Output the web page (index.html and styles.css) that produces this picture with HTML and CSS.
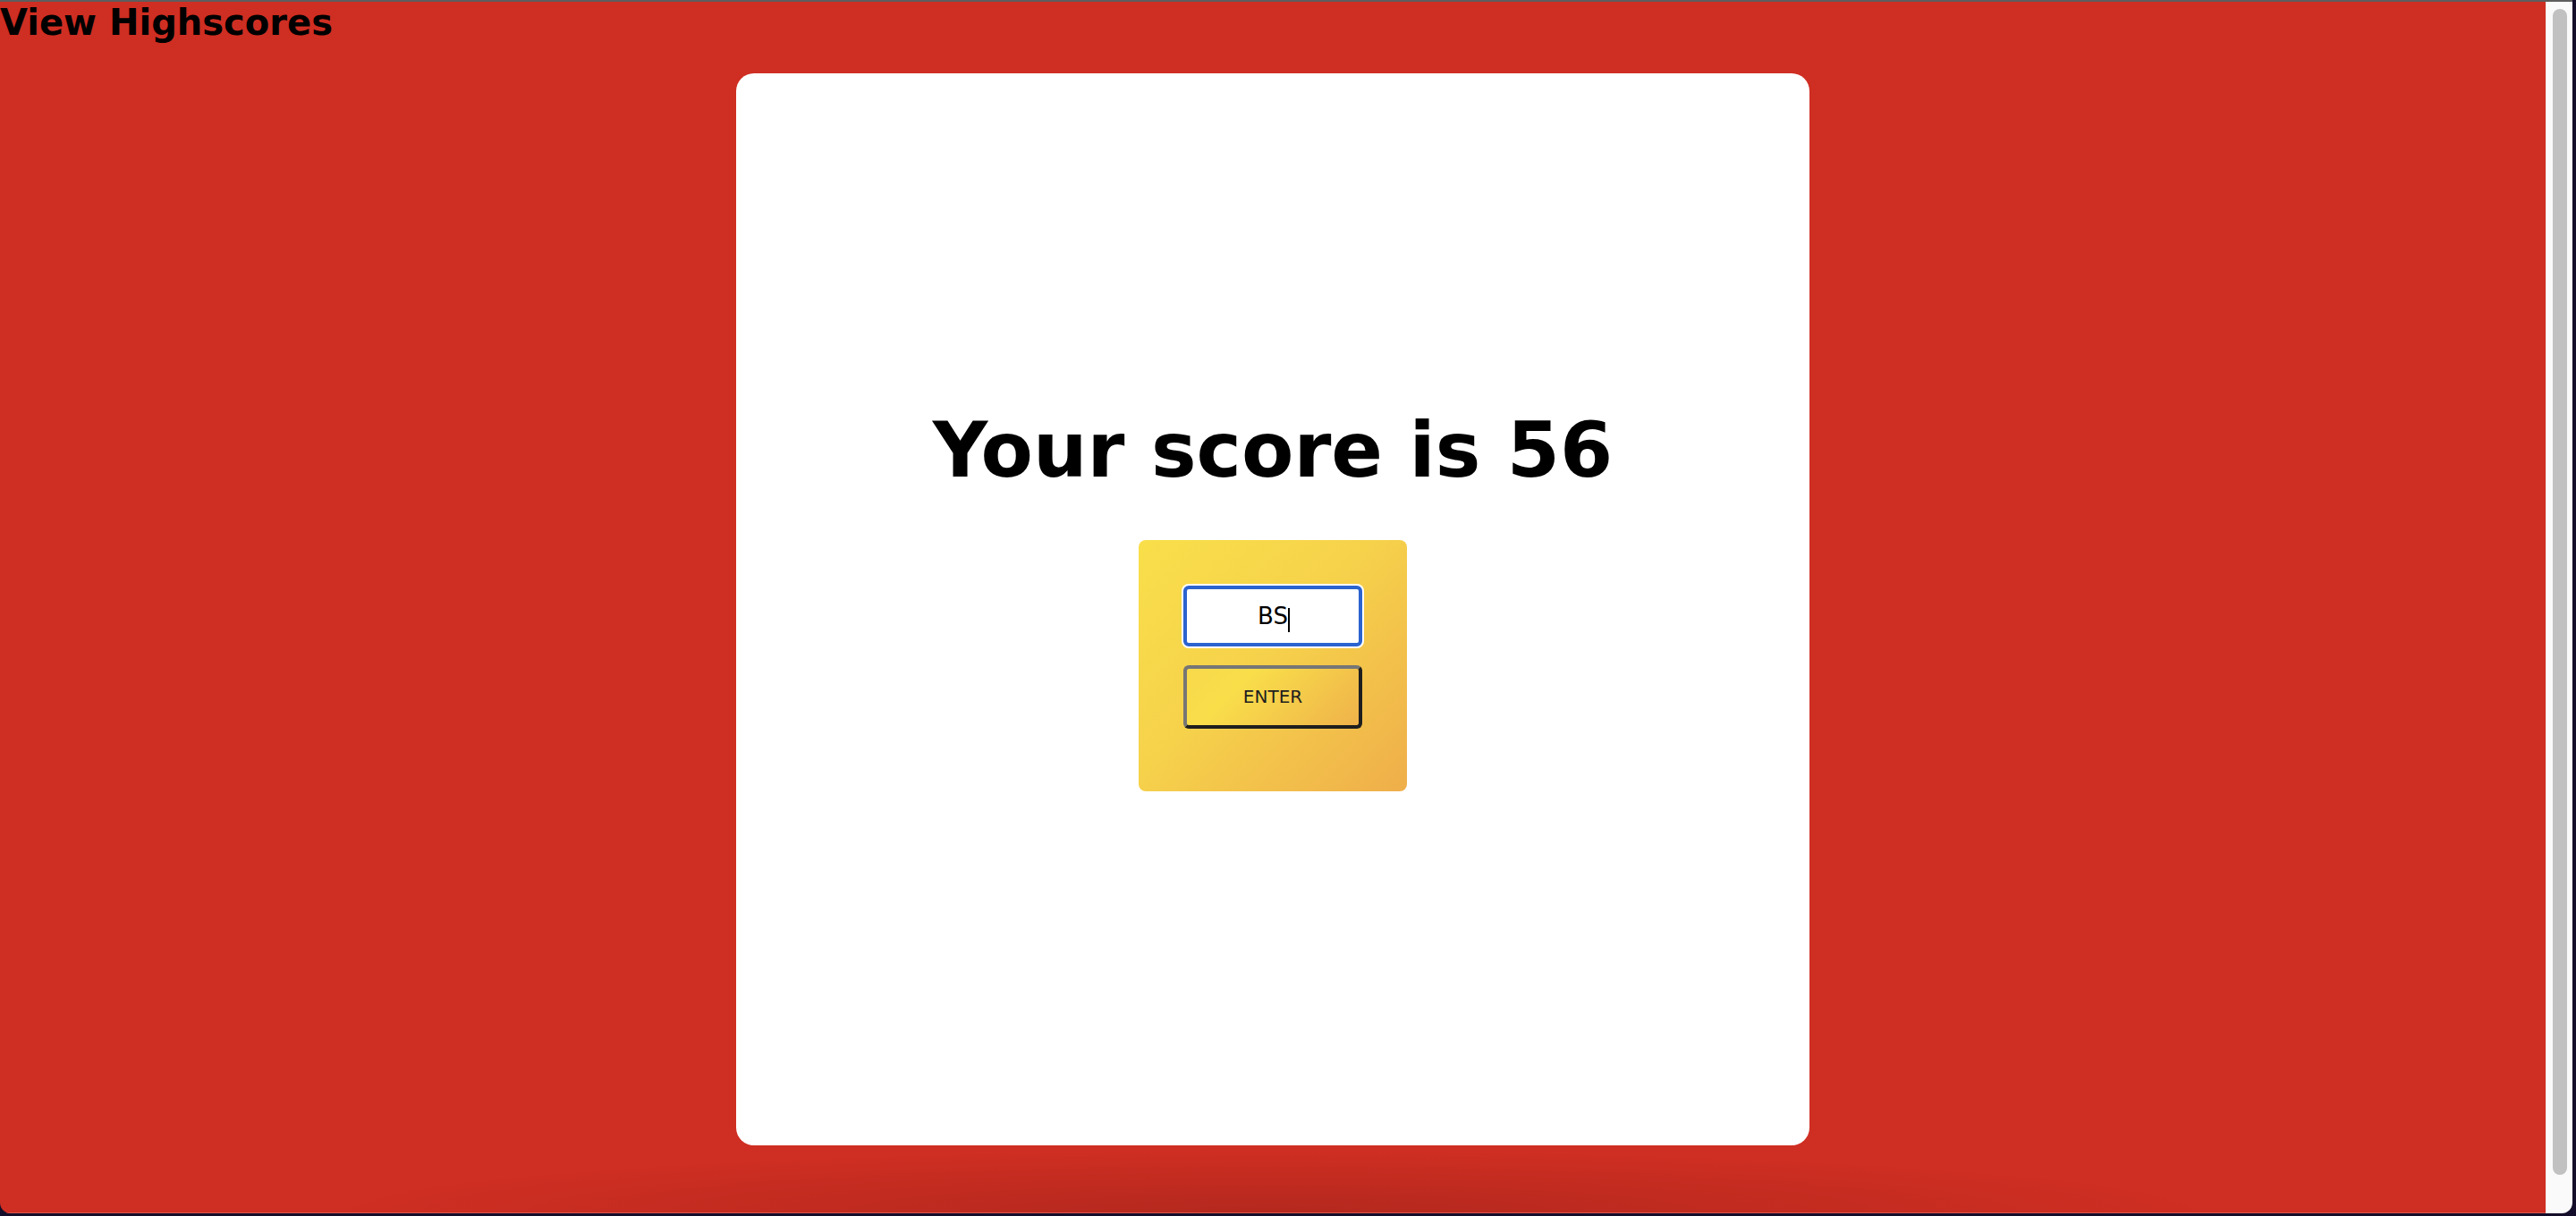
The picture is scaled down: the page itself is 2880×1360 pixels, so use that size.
FILE: index.html
```html
<!DOCTYPE html>
<html lang="en">
<head>
<meta charset="utf-8">
<title>Quiz – Your score</title>
<link rel="stylesheet" href="styles.css">
</head>
<body>
  <div class="window">
    <main class="page">
      <a class="highscores" href="#">View Highscores</a>
      <section class="card">
        <h1 class="score">Your score is 56</h1>
        <form class="entry">
          <div class="field">
            <input class="initials" type="text" value="BS" aria-label="Initials">
            <span class="caret"></span>
          </div>
          <button class="enter" type="button">ENTER</button>
        </form>
      </section>
    </main>
    <div class="scrollbar"><div class="thumb"></div></div>
  </div>
</body>
</html>
```

FILE: styles.css
```css
html, body {
  margin: 0;
  padding: 0;
  background: #140e2a;
  height: 1360px;
  overflow: hidden;
  font-family: "DejaVu Sans", Verdana, sans-serif;
}

.window {
  width: 2876px;
  height: 1357px;
  box-sizing: border-box;
  border-top: 2px solid #5e5e5e;
  border-radius: 0 0 12px 12px;
  overflow: hidden;
  display: flex;
}

.page {
  flex: 1;
  display: flex;
  flex-direction: column;
  align-items: flex-start;
  background:
    radial-gradient(ellipse 1050px 70px at 50% 100%, rgba(0, 0, 0, 0.13), rgba(0, 0, 0, 0)),
    #cf2e22;
  border-bottom: 1px solid #d9564c;
}

.highscores {
  display: block;
  font-family: "DejaVu Sans", Verdana, sans-serif;
  font-weight: bold;
  font-size: 40px;
  line-height: 47px;
  color: #000;
  text-decoration: none;
}

.card {
  align-self: center;
  margin-top: 33px;
  width: 1200px;
  height: 1199px;
  box-sizing: border-box;
  padding-bottom: 24px;
  background: #fff;
  border-radius: 20px;
  display: flex;
  flex-direction: column;
  align-items: center;
  justify-content: center;
}

.score {
  margin: 0 0 51px;
  font-family: "DejaVu Sans", Verdana, sans-serif;
  font-weight: bold;
  font-size: 85px;
  line-height: 98px;
  color: #000;
}

.entry {
  width: 300px;
  height: 281px;
  box-sizing: border-box;
  padding: 51px 0 0;
  border-radius: 8px;
  background: linear-gradient(135deg, #f9df4a 0%, #f6d24b 45%, #efae4a 100%);
  display: flex;
  flex-direction: column;
  align-items: center;
  gap: 21px;
}

.field {
  position: relative;
  width: 200px;
  height: 68px;
}

.initials {
  width: 200px;
  height: 68px;
  box-sizing: border-box;
  margin: 0;
  padding: 0;
  border: 4px solid #2b63cf;
  border-radius: 6px;
  box-shadow: 0 0 0 2px #fff;
  outline: none;
  background: #fff;
  font-family: "DejaVu Sans", Verdana, sans-serif;
  font-size: 26px;
  color: #000;
  text-align: center;
}

.caret {
  position: absolute;
  left: calc(50% + 17px);
  top: 25px;
  width: 2px;
  height: 27px;
  background: #000;
}

.enter {
  width: 200px;
  height: 71px;
  box-sizing: border-box;
  margin: 0;
  padding: 0;
  border: 4px solid;
  border-color: #767676 #1e1e1e #1e1e1e #767676;
  border-radius: 6px;
  background: linear-gradient(135deg, #f8d94a 0%, #f9de4a 30%, #efb24a 100%);
  font-family: "DejaVu Sans", Verdana, sans-serif;
  font-size: 20px;
  color: #1e1e1e;
  cursor: pointer;
}

.scrollbar {
  width: 30px;
  box-sizing: border-box;
  background: #fafafa;
  border-left: 1px solid #ececec;
  padding-top: 8px;
  display: flex;
  justify-content: center;
}

.thumb {
  width: 16px;
  height: 1304px;
  border-radius: 8px;
  background: #c1c1c1;
}
```
